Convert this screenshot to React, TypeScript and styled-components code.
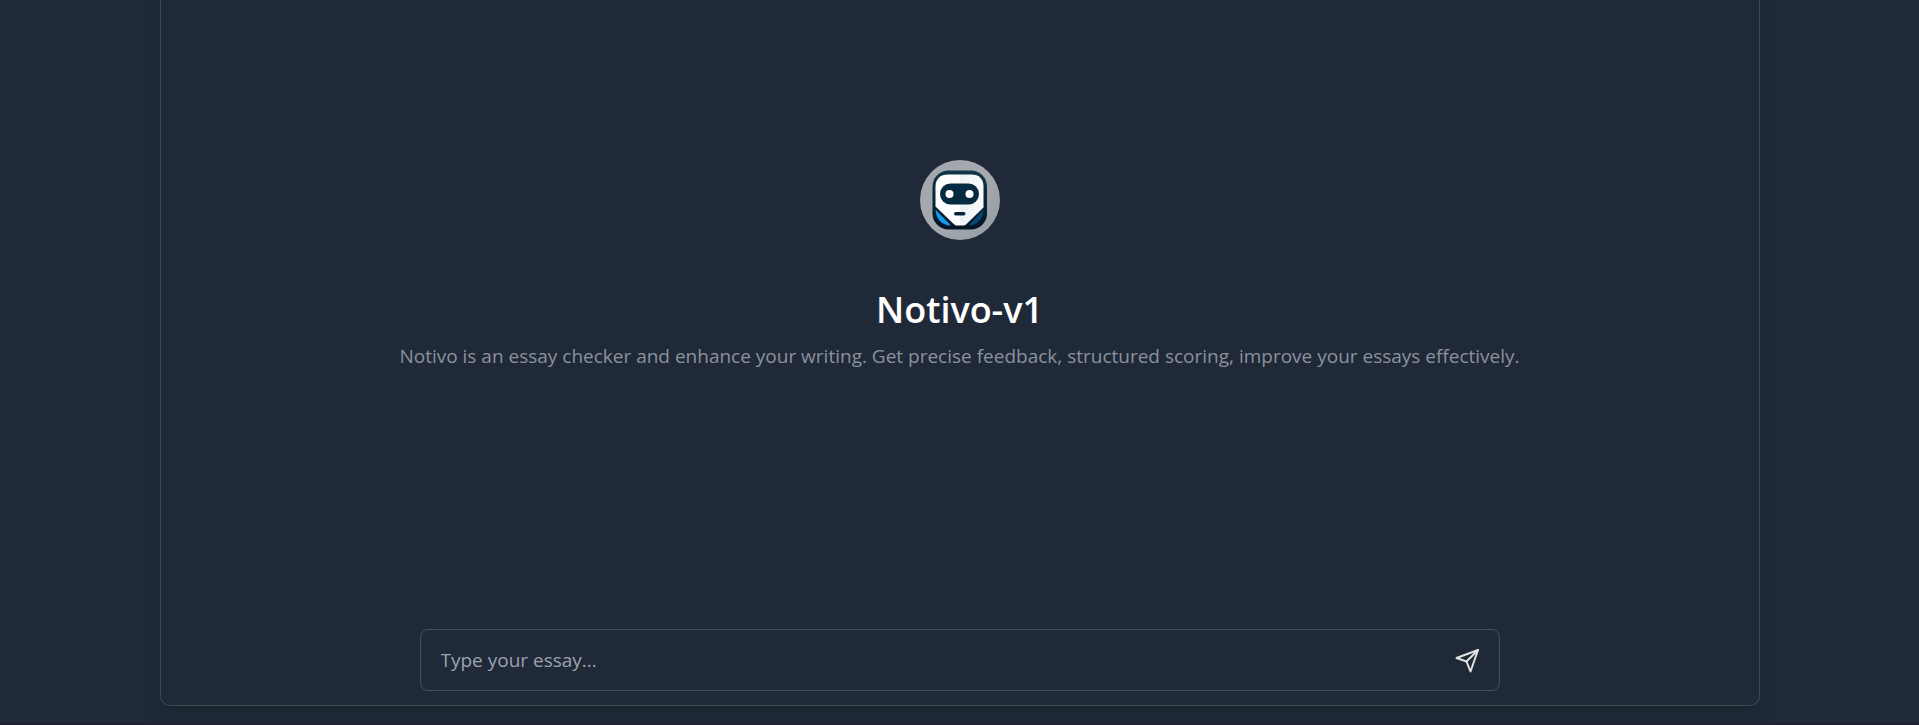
import React from "react";
import styled, { createGlobalStyle } from "styled-components";

const GlobalStyle = createGlobalStyle`
  *, *::before, *::after { box-sizing: border-box; }
  html { height: 100%; }
  body {
    margin: 0;
    min-height: 100%;
    background: #202937;
    font-family: "Segoe UI", "Open Sans", "Noto Sans", sans-serif;
    color: #fff;
  }
`;

const Page = styled.div`
  display: flex;
  flex-direction: column;
  min-height: 100vh;
  padding: 0 24px 17px;
  border-bottom: 2px solid #201f33;
  overflow: hidden;
`;

const ChatCard = styled.main`
  flex: 1;
  display: flex;
  flex-direction: column;
  align-items: center;
  width: 100%;
  max-width: 1600px;
  margin: 0 auto;
  padding: 0 16px 14px;
  border: 1px solid #3f4751;
  border-top: 0;
  border-radius: 0 0 10px 10px;
  box-shadow: 0 10px 15px -3px rgba(28, 38, 48, 0.8);
`;

const Welcome = styled.section`
  flex: 1;
  display: flex;
  flex-direction: column;
  align-items: center;
  width: 100%;
  padding-top: 160px;
  text-align: center;
`;

const Avatar = styled.svg`
  display: block;
  width: 80px;
  height: 80px;
  margin-bottom: 48px;
`;

const Title = styled.h1`
  margin: 0 0 10px;
  font-size: 36px;
  line-height: 44px;
  font-weight: 600;
`;

const Description = styled.p`
  margin: 0;
  font-size: 19px;
  line-height: 28px;
  color: #8b929d;
`;

const Composer = styled.form`
  display: flex;
  align-items: center;
  width: 100%;
  max-width: 1080px;
  height: 62px;
  padding: 0 16px 0 20px;
  border: 1px solid #474e5a;
  border-radius: 8px;
`;

const EssayInput = styled.input`
  flex: 1;
  min-width: 0;
  padding: 0;
  border: 0;
  outline: 0;
  background: transparent;
  font: inherit;
  font-size: 19px;
  line-height: 28px;
  color: #fff;

  &::placeholder {
    color: #9ca3af;
    opacity: 1;
  }
`;

const SendButton = styled.button`
  display: flex;
  padding: 0;
  border: 0;
  background: transparent;
  color: #e2e2e2;
  cursor: pointer;
`;

function RobotAvatar() {
  return (
    <Avatar viewBox="0 0 80 80" role="img" aria-label="Notivo">
      <defs>
        <linearGradient id="disc" x1="0" y1="0" x2="1" y2="1">
          <stop offset="0" stopColor="#a2a5a9" />
          <stop offset="0.5" stopColor="#a6a9ad" />
          <stop offset="1" stopColor="#929da4" />
        </linearGradient>
        <linearGradient id="shell" x1="0" y1="0" x2="0" y2="1">
          <stop offset="0" stopColor="#103648" />
          <stop offset="1" stopColor="#031426" />
        </linearGradient>
        <linearGradient id="face" x1="0" y1="0" x2="1" y2="0">
          <stop offset="0.5" stopColor="#ffffff" />
          <stop offset="0.52" stopColor="#eef2f4" />
          <stop offset="1" stopColor="#f8fafb" />
        </linearGradient>
      </defs>
      <circle cx="40" cy="40" r="40" fill="url(#disc)" />
      <rect x="12.5" y="10.5" width="54.5" height="59" rx="16" fill="url(#shell)" />
      <path d="M15.500 49.500c.5 9.500 6 16 15.500 16z" fill="#159be8" />
      <path d="M63.500 49.500c-.5 9.500-6 16-15 16z" fill="#07466e" />
      <path
        d="M28 14.500h23.500c7.500 0 12 4.500 12 12v21L46 64.500c-1 .8-2 1-3 1h-6c-1 0-2-.3-3-1.200L15.500 46.500v-20c0-7.500 5-12 12.500-12z"
        fill="url(#face)"
      />
      <rect x="20" y="23.500" width="39" height="21" rx="10.500" fill="#062b40" />
      <circle cx="29.500" cy="34" r="4" fill="#fff" />
      <circle cx="49.500" cy="34" r="4" fill="#fff" />
      <rect x="34" y="52" width="11.500" height="3.500" rx="1.750" fill="#08263a" />
    </Avatar>
  );
}

export default function App() {
  return (
    <>
      <GlobalStyle />
      <Page>
        <ChatCard>
          <Welcome>
            <RobotAvatar />
            <Title>Notivo-v1</Title>
            <Description>
              Notivo is an essay checker and enhance your writing. Get precise feedback, structured
              scoring, improve your essays effectively.
            </Description>
          </Welcome>
          <Composer onSubmit={(event) => event.preventDefault()}>
            <EssayInput type="text" aria-label="Type your essay" placeholder="Type your essay..." />
            <SendButton type="submit" aria-label="Send">
              <svg
                width="30"
                height="30"
                viewBox="0 0 30 30"
                fill="none"
                stroke="currentColor"
                strokeWidth="2"
                strokeLinecap="round"
                strokeLinejoin="round"
                aria-hidden="true"
              >
                <path d="M25 5 3.500 13l10 3.500L17.500 26.500z" />
                <path d="M25 5L13.500 16.500" />
              </svg>
            </SendButton>
          </Composer>
        </ChatCard>
      </Page>
    </>
  );
}
